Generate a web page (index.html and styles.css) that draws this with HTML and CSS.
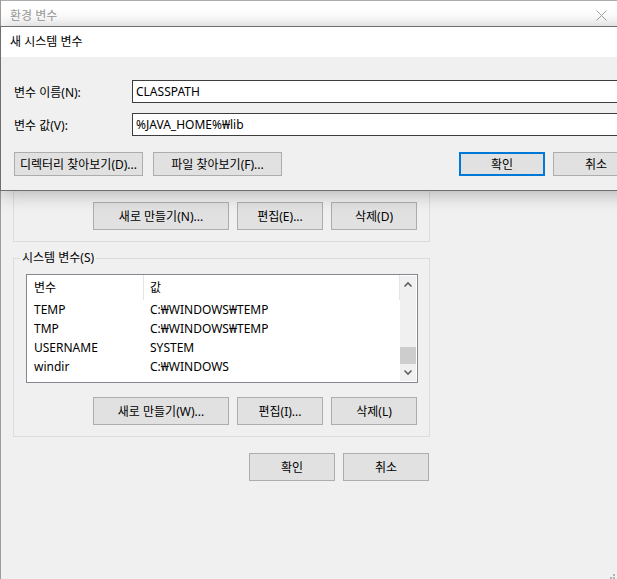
FILE: index.html
```html
<!DOCTYPE html>
<html lang="ko">
<head>
  <meta charset="utf-8">
  <title>환경 변수</title>
  <link rel="stylesheet" href="styles.css">
</head>
<body>
  <div class="window">
    <div class="titlebar">
      <span class="title">환경 변수</span>
      <svg class="close" width="11" height="11" viewBox="0 0 11 11">
        <path d="M0.5 0.5L10.5 10.5M10.5 0.5L0.5 10.5" stroke="#a3a3a3" stroke-width="1" fill="none"/>
      </svg>
    </div>

    <div class="window-body">
      <fieldset class="group">
        <legend>사용자 변수(U)</legend>
        <div class="var-list">
          <div class="list-view">
            <div class="list-header"><span class="col-name">변수</span><span class="col-value">값</span></div>
            <div class="list-row"><span class="col-name">OneDrive</span><span class="col-value">C:₩Users₩user₩OneDrive</span></div>
            <div class="list-row"><span class="col-name">Path</span><span class="col-value">C:₩Users₩user₩AppData₩Local₩Microsoft₩WindowsApps;</span></div>
            <div class="list-row"><span class="col-name">TEMP</span><span class="col-value">C:₩Users₩user₩AppData₩Local₩Temp</span></div>
            <div class="list-row"><span class="col-name">TMP</span><span class="col-value">C:₩Users₩user₩AppData₩Local₩Temp</span></div>
          </div>
        </div>
        <div class="group-buttons">
          <button class="btn btn-new">새로 만들기(N)...</button>
          <button class="btn">편집(E)...</button>
          <button class="btn">삭제(D)</button>
        </div>
      </fieldset>

      <fieldset class="group group-system">
        <legend>시스템 변수(S)</legend>
        <div class="var-list">
          <div class="list-view">
            <div class="list-header"><span class="col-name">변수</span><span class="col-value">값</span></div>
            <div class="list-row"><span class="col-name">TEMP</span><span class="col-value">C:₩WINDOWS₩TEMP</span></div>
            <div class="list-row"><span class="col-name">TMP</span><span class="col-value">C:₩WINDOWS₩TEMP</span></div>
            <div class="list-row"><span class="col-name">USERNAME</span><span class="col-value">SYSTEM</span></div>
            <div class="list-row"><span class="col-name">windir</span><span class="col-value">C:₩WINDOWS</span></div>
          </div>
          <div class="scrollbar">
            <svg class="arrow" width="16" height="17" viewBox="0 0 16 17">
              <path d="M4.5 10.5L8 7L11.5 10.5" stroke="#606060" stroke-width="1.6" fill="none"/>
            </svg>
            <div class="track"><div class="thumb"></div></div>
            <svg class="arrow" width="16" height="17" viewBox="0 0 16 17">
              <path d="M4.5 6.5L8 10L11.5 6.5" stroke="#606060" stroke-width="1.6" fill="none"/>
            </svg>
          </div>
        </div>
        <div class="group-buttons">
          <button class="btn btn-new">새로 만들기(W)...</button>
          <button class="btn">편집(I)...</button>
          <button class="btn">삭제(L)</button>
        </div>
      </fieldset>

      <div class="window-buttons">
        <button class="btn">확인</button>
        <button class="btn">취소</button>
      </div>
    </div>

    <svg class="grip" width="14" height="14" viewBox="0 0 14 14">
      <rect x="11" y="8" width="2" height="2" fill="#b4b4b4"/>
      <rect x="8" y="11" width="2" height="2" fill="#b4b4b4"/>
      <rect x="11" y="11" width="2" height="2" fill="#b4b4b4"/>
    </svg>
  </div>

  <div class="dialog">
    <div class="dialog-title">새 시스템 변수</div>
    <div class="dialog-body">
      <div class="field-row">
        <label for="var-name">변수 이름(N):</label>
        <input type="text" id="var-name" value="CLASSPATH">
      </div>
      <div class="field-row">
        <label for="var-value">변수 값(V):</label>
        <input type="text" id="var-value" value="%JAVA_HOME%₩lib">
      </div>
      <div class="dialog-actions">
        <button class="btn btn-browse">디렉터리 찾아보기(D)...</button>
        <button class="btn btn-browse">파일 찾아보기(F)...</button>
        <button class="btn btn-default">확인</button>
        <button class="btn">취소</button>
      </div>
    </div>
  </div>
</body>
</html>
```

FILE: styles.css
```css
html, body {
  margin: 0;
  padding: 0;
  overflow: hidden;
}
body {
  font-family: "Noto Sans", "Noto Sans CJK KR", sans-serif;
  font-size: 12px;
  color: #000;
  background-color: #f0f0f0;
}

/* background window */
.window {
  position: relative;
  height: 579px;
  border-left: 1px solid #9c9c9c;
  background-color: #f0f0f0;
}
.titlebar {
  display: flex;
  justify-content: space-between;
  align-items: center;
  height: 26px;
  box-sizing: border-box;
  padding: 3px 10px 0 9px;
  border-top: 1px solid #acacac;
  background-color: #fff;
  color: #9a9a9a;
}
.close {
  margin-top: 1px;
}
.window-body {
  padding: 29px 0 0 12px;
}
.group {
  width: 417px;
  box-sizing: border-box;
  margin: 0;
  padding: 8px 11px 11px 12px;
  border: 1px solid #dcdcdc;
  min-width: 0;
}
.group legend {
  margin-left: -6px;
  padding: 0 2px;
  line-height: 16px;
}
.group-system {
  margin-top: 8px;
}
.var-list {
  display: flex;
  height: 109px;
  box-sizing: border-box;
  border: 1px solid #828790;
  background-color: #fff;
  overflow: hidden;
}
.list-view {
  flex: 1;
}
.list-header {
  display: flex;
  width: 372px;
  height: 25px;
  line-height: 25px;
  border-right: 1px solid #e5e5e5;
}
.list-row {
  display: flex;
  height: 19px;
  line-height: 19px;
  white-space: nowrap;
}
.col-name {
  width: 117px;
  flex: none;
  box-sizing: border-box;
  padding-left: 7px;
}
.list-header .col-name {
  border-right: 1px solid #e5e5e5;
}
.col-value {
  padding-left: 6px;
  overflow: hidden;
}
.scrollbar {
  display: flex;
  flex-direction: column;
  width: 16px;
  margin: 1px 1px 1px 0;
  background-color: #f0f0f0;
}
.arrow {
  display: block;
  flex: none;
}
.track {
  flex: 1;
  display: flex;
  flex-direction: column;
  justify-content: flex-end;
}
.thumb {
  height: 17px;
  background-color: #cdcdcd;
}
.group-buttons {
  display: flex;
  justify-content: flex-end;
  gap: 8px;
  margin-top: 14px;
  padding-right: 1px;
}
.window-buttons {
  display: flex;
  justify-content: flex-end;
  gap: 8px;
  width: 417px;
  margin-top: 16px;
  padding-right: 1px;
  box-sizing: border-box;
}
.grip {
  position: absolute;
  right: 1px;
  bottom: -1px;
}

/* buttons */
.btn {
  width: 86px;
  height: 28px;
  margin: 0;
  padding: 0;
  font: inherit;
  color: #000;
  background-color: #e1e1e1;
  border: 1px solid #adadad;
  white-space: nowrap;
}
.btn-new {
  width: 136px;
}

/* new system variable dialog */
.dialog {
  position: absolute;
  left: 0;
  top: 26px;
  width: 650px;
  border: 1px solid #6f6f6f;
  background-color: #f0f0f0;
  box-shadow: 0 2px 18px rgba(0, 0, 0, 0.28);
}
.dialog-title {
  height: 30px;
  line-height: 30px;
  padding-left: 9px;
  background-color: #fff;
}
.dialog-body {
  padding: 23px 12px 14px 13px;
}
.field-row {
  display: flex;
  align-items: center;
  height: 23px;
  margin-bottom: 10px;
}
.field-row label {
  width: 118px;
  flex: none;
}
.field-row input {
  flex: 1;
  height: 23px;
  box-sizing: border-box;
  margin: 0;
  padding: 0 3px;
  font: inherit;
  color: #000;
  border: 1px solid #3d3d3d;
  outline: none;
}
.dialog-actions {
  display: flex;
  gap: 10px;
  margin-top: 16px;
}
.dialog-actions .btn {
  height: 24px;
}
.btn-browse {
  width: 129px;
}
.btn-default {
  margin-left: auto;
  border: 2px solid #0078d7;
}
.btn-default + .btn {
  margin-left: -2px;
}
```
